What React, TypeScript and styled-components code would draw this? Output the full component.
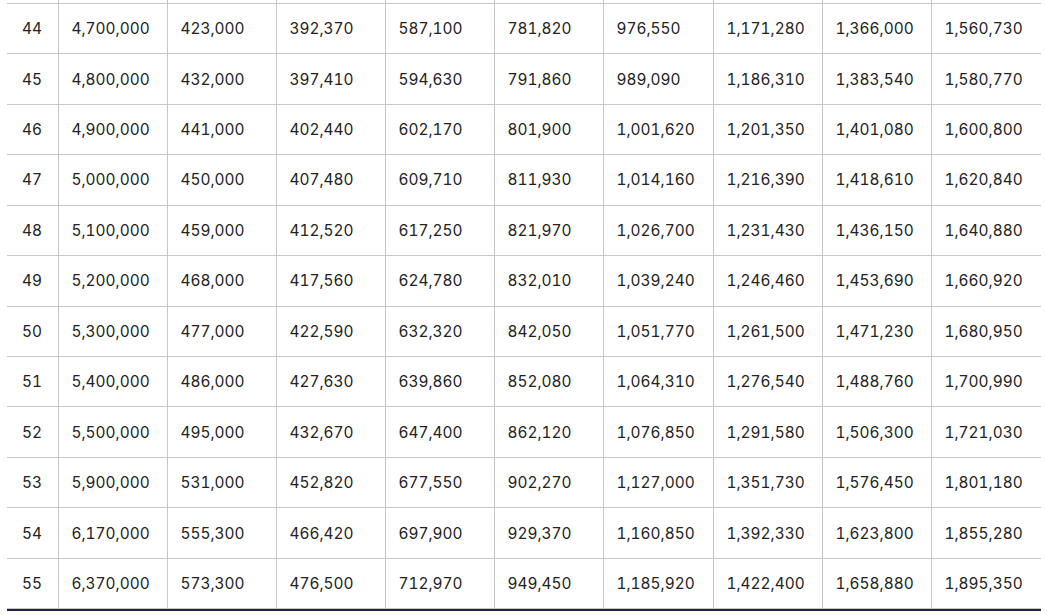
import React from "react";
import styled, { createGlobalStyle } from "styled-components";

const Global = createGlobalStyle`
  html, body { margin: 0; padding: 0; background: #ffffff; overflow: hidden; }
  body { font-family: Inter, "Noto Sans", sans-serif; }
`;

const Page = styled.div`
  padding: 0 6px 0 7px;
  height: 615px;
  overflow: hidden;
`;

const Table = styled.table`
  width: 1034px;
  border-collapse: collapse;
  table-layout: fixed;
  margin-top: -47px;
  border-bottom: 1px solid #c6c6c6;
  box-shadow: 0 2px 0 #1e2340;
`;

const Row = styled.tr`
  height: 50.45px;
  border-bottom: 1px solid #c6c6c6;
`;

const Cell = styled.td<{ $first?: boolean }>`
  padding: 0 0 0 ${(p) => (p.$first ? "15px" : "13px")};
  border-left: ${(p) => (p.$first ? "none" : "1px solid #c6c6c6")};
  font-size: 15.4px;
  font-variant-numeric: tabular-nums;
  color: #222222;
  white-space: nowrap;
  vertical-align: middle;
`;

const widths = [51, 109, 109, 109, 109, 109, 110, 109, 109, 110];

const rows: string[][] = [
  ["44", "4,700,000", "423,000", "392,370", "587,100", "781,820", "976,550", "1,171,280", "1,366,000", "1,560,730"],
  ["45", "4,800,000", "432,000", "397,410", "594,630", "791,860", "989,090", "1,186,310", "1,383,540", "1,580,770"],
  ["46", "4,900,000", "441,000", "402,440", "602,170", "801,900", "1,001,620", "1,201,350", "1,401,080", "1,600,800"],
  ["47", "5,000,000", "450,000", "407,480", "609,710", "811,930", "1,014,160", "1,216,390", "1,418,610", "1,620,840"],
  ["48", "5,100,000", "459,000", "412,520", "617,250", "821,970", "1,026,700", "1,231,430", "1,436,150", "1,640,880"],
  ["49", "5,200,000", "468,000", "417,560", "624,780", "832,010", "1,039,240", "1,246,460", "1,453,690", "1,660,920"],
  ["50", "5,300,000", "477,000", "422,590", "632,320", "842,050", "1,051,770", "1,261,500", "1,471,230", "1,680,950"],
  ["51", "5,400,000", "486,000", "427,630", "639,860", "852,080", "1,064,310", "1,276,540", "1,488,760", "1,700,990"],
  ["52", "5,500,000", "495,000", "432,670", "647,400", "862,120", "1,076,850", "1,291,580", "1,506,300", "1,721,030"],
  ["53", "5,900,000", "531,000", "452,820", "677,550", "902,270", "1,127,000", "1,351,730", "1,576,450", "1,801,180"],
  ["54", "6,170,000", "555,300", "466,420", "697,900", "929,370", "1,160,850", "1,392,330", "1,623,800", "1,855,280"],
  ["55", "6,370,000", "573,300", "476,500", "712,970", "949,450", "1,185,920", "1,422,400", "1,658,880", "1,895,350"],
];

export default function App() {
  return (
    <>
      <Global />
      <Page>
        <Table>
          <colgroup>
            {widths.map((w, i) => (
              <col key={i} style={{ width: w }} />
            ))}
          </colgroup>
          <tbody>
            <Row aria-hidden="true">
              {widths.map((_, i) => (
                <Cell key={i} $first={i === 0} />
              ))}
            </Row>
            {rows.map((r) => (
              <Row key={r[0]}>
                {r.map((v, i) => (
                  <Cell key={i} $first={i === 0}>
                    {v}
                  </Cell>
                ))}
              </Row>
            ))}
          </tbody>
        </Table>
      </Page>
    </>
  );
}
